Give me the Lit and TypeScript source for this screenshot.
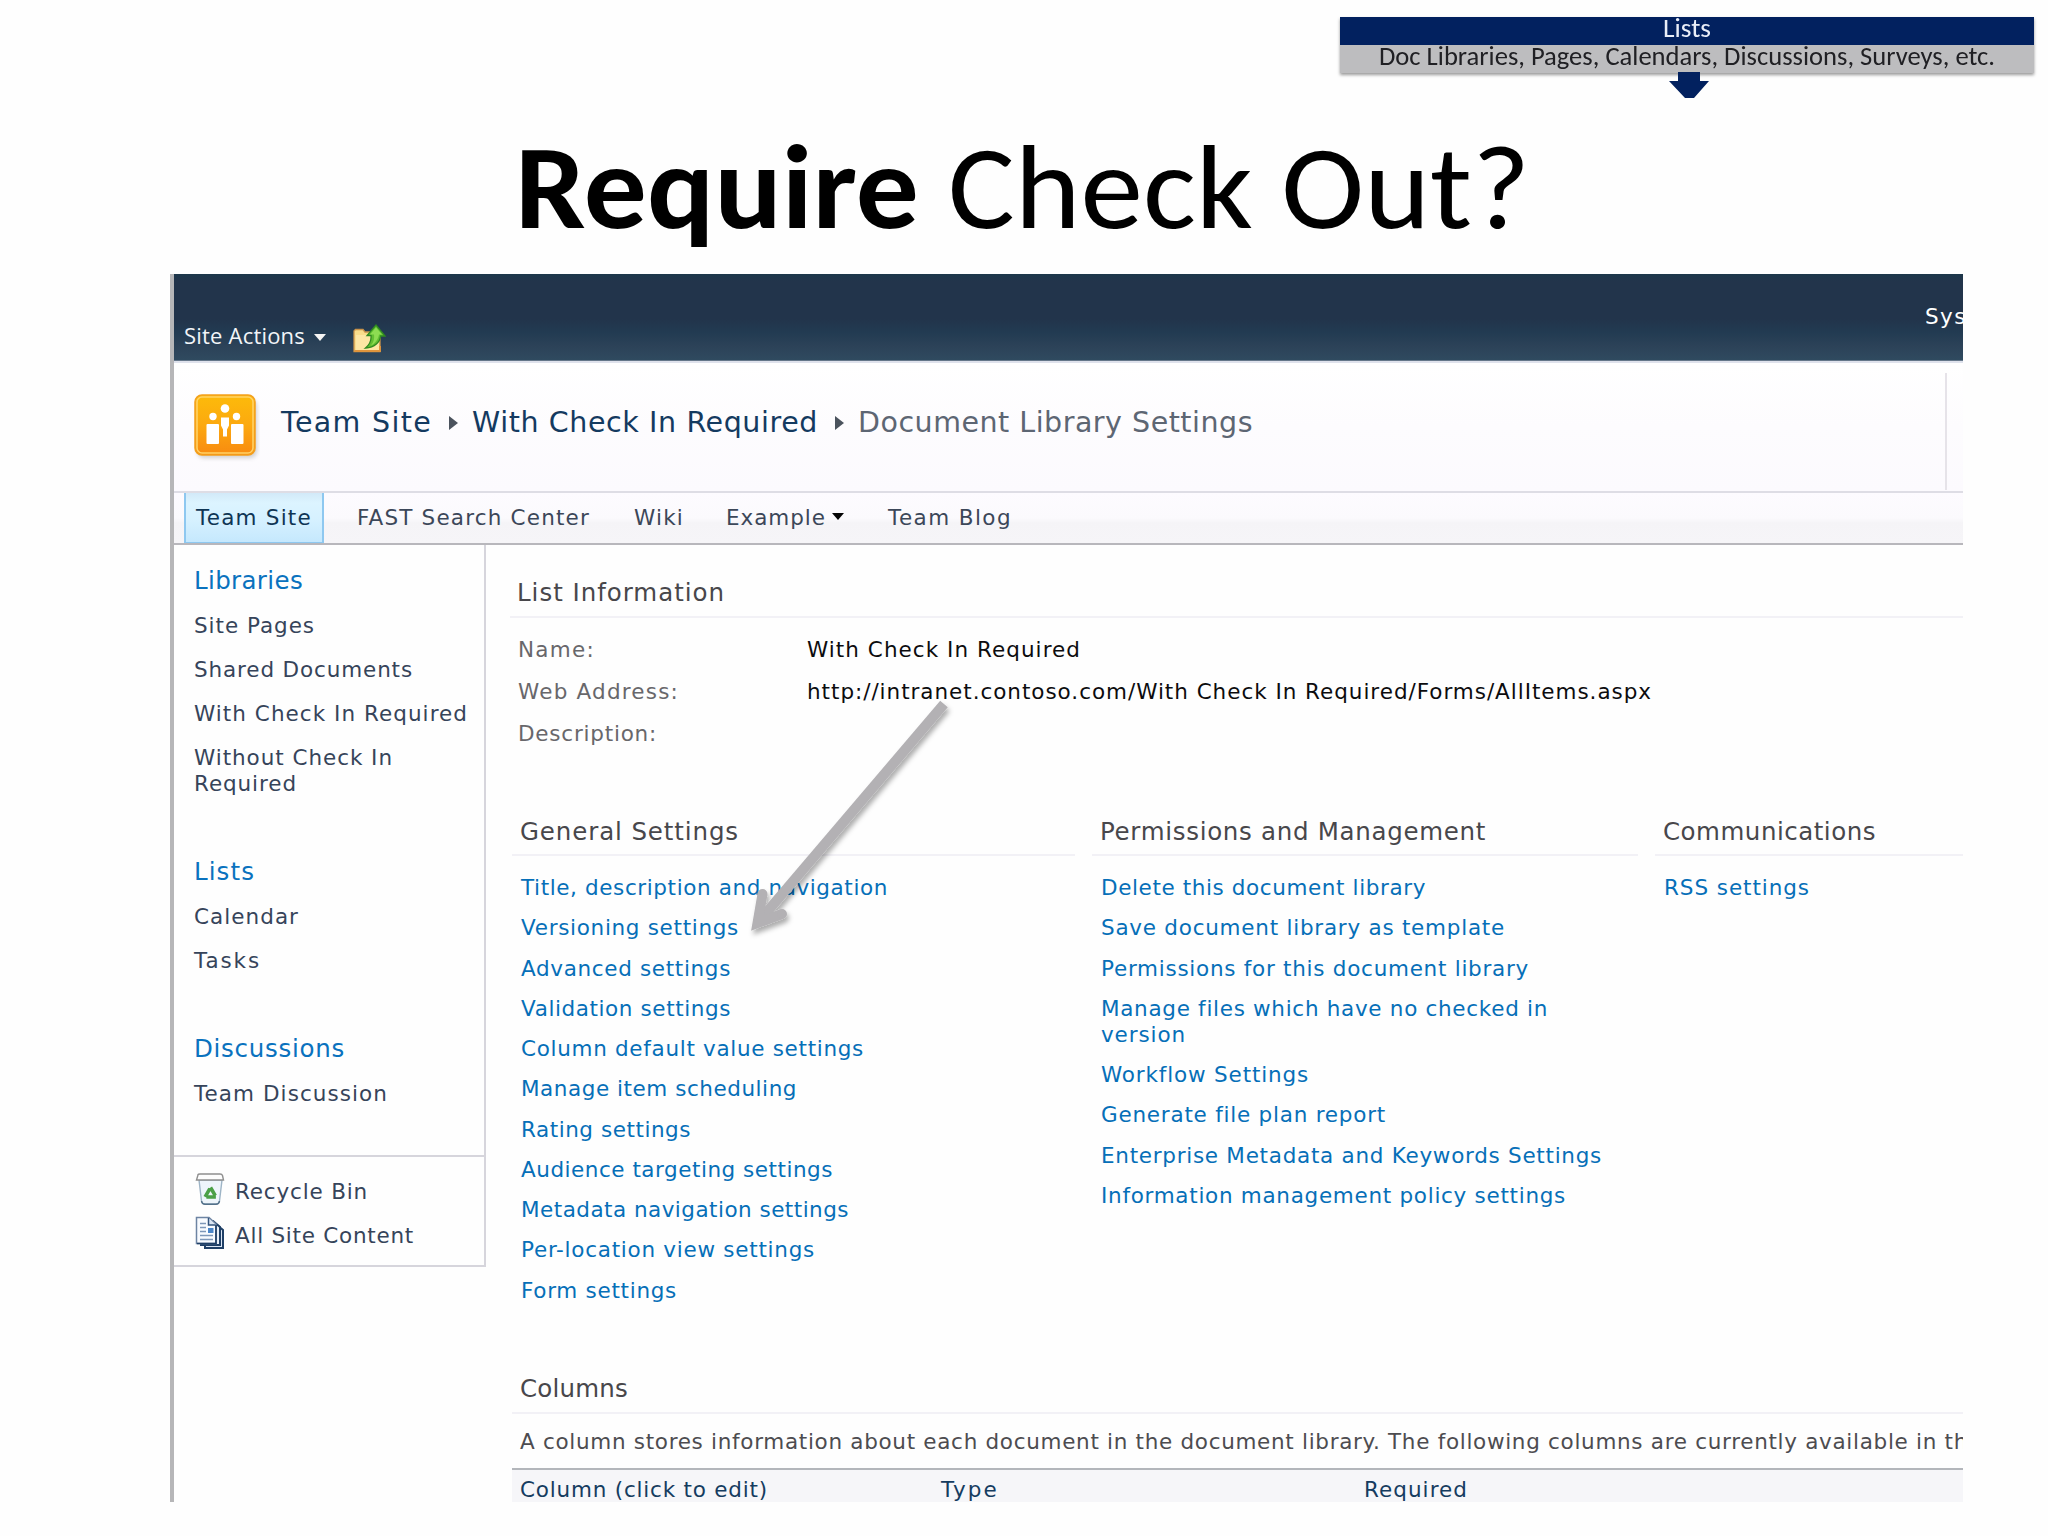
import { LitElement, html, css, svg } from "lit";
import { customElement, property } from "lit/decorators.js";

type Label = [text: string, width: number];

/** A single line of text set to a given measure by tracking or by condensing. */
@customElement("measured-label")
export class MeasuredLabel extends LitElement {
  @property() text = "";
  @property({ type: Number }) width = 0;
  @property({ type: Boolean }) condense = false;

  static styles = css`
    :host { display: inline-block; white-space: pre; vertical-align: top; text-align: left; }
    .run { display: inline-block; transform-origin: 0 50%; }
  `;

  updated() {
    const run = this.renderRoot.querySelector(".run") as HTMLElement;
    run.style.letterSpacing = "0px";
    run.style.transform = "none";
    this.style.width = `${this.width}px`;
    const natural = run.getBoundingClientRect().width;
    if (!natural || !this.width) return;
    if (this.condense) {
      run.style.transform = `scaleX(${this.width / natural})`;
    } else {
      run.style.letterSpacing = `${(this.width - natural) / this.text.length}px`;
    }
  }

  render() {
    return html`<span class="run">${this.text}</span>`;
  }
}

const label = ([text, width]: Label) =>
  html`<measured-label .text=${text} .width=${width}></measured-label>`;
const condensed = (text: string, width: number) =>
  html`<measured-label condense .text=${text} .width=${width}></measured-label>`;

const navGroups: { title: Label; items: Label[][] }[] = [
  {
    title: ["Libraries", 109],
    items: [
      [["Site Pages", 121]],
      [["Shared Documents", 219]],
      [["With Check In Required", 274]],
      [["Without Check In", 199], ["Required", 103]],
    ],
  },
  { title: ["Lists", 61], items: [[["Calendar", 105]], [["Tasks", 67]]] },
  { title: ["Discussions", 151], items: [[["Team Discussion", 194]]] },
];

const settings: { title: Label; links: Label[][] }[] = [
  {
    title: ["General Settings", 219],
    links: [
      [["Title, description and navigation", 367]],
      [["Versioning settings", 218]],
      [["Advanced settings", 210]],
      [["Validation settings", 210]],
      [["Column default value settings", 343]],
      [["Manage item scheduling", 276]],
      [["Rating settings", 170]],
      [["Audience targeting settings", 312]],
      [["Metadata navigation settings", 328]],
      [["Per-location view settings", 294]],
      [["Form settings", 156]],
    ],
  },
  {
    title: ["Permissions and Management", 386],
    links: [
      [["Delete this document library", 325]],
      [["Save document library as template", 404]],
      [["Permissions for this document library", 428]],
      [["Manage files which have no checked in", 447], ["version", 85]],
      [["Workflow Settings", 208]],
      [["Generate file plan report", 285]],
      [["Enterprise Metadata and Keywords Settings", 501]],
      [["Information management policy settings", 465]],
    ],
  },
  { title: ["Communications", 213], links: [[["RSS settings", 146]]] },
];

const folderIcon = svg`<svg class="folder" viewBox="0 0 34 30" width="34" height="30">
  <path d="M2 8 L3.500 6.500 H11 L13 9 H28 V28.500 H2Z" fill="#f9dd8b" stroke="#c8924a" stroke-width="1.300"/>
  <path d="M4 12 H27 V27.500 H4Z" fill="#fde6a4"/>
  <path d="M2.500 28 H28 V23 " fill="none" stroke="#e0953c" stroke-width="1.800"/>
  <path d="M13.500 25 C18 21.500 19.500 18 19 12.500 H15 L24 2 L33 13 H28.500 C28 19 23 24.500 13.500 25Z" fill="#62bf33" stroke="#2f8a20" stroke-width="1.300"/>
  <path d="M24 4.500 L30 11.500 H27 C26 17 23 20.500 19 22.500 C22 19 22.500 15 22 11.500 H18Z" fill="#8ddc52"/>
</svg>`;

const siteLogo = svg`<svg class="logo" viewBox="0 0 66 68" width="66" height="68">
  <defs>
    <linearGradient id="amber" x1="0" y1="0" x2="0" y2="1">
      <stop offset="0" stop-color="#fdbb0a"/><stop offset=".5" stop-color="#fca90f"/><stop offset="1" stop-color="#f88a10"/>
    </linearGradient>
    <filter id="logo-shade" x="-20%" y="-20%" width="140%" height="140%"><feGaussianBlur stdDeviation="2"/></filter>
  </defs>
  <rect x="3" y="5" width="60" height="59" rx="7" fill="#9a9a9a" opacity=".45" filter="url(#logo-shade)"/>
  <rect x="1" y="1" width="60" height="60" rx="7" fill="url(#amber)" stroke="#f3a01d" stroke-width="1.500"/>
  <rect x="3" y="3" width="56" height="56" rx="5" fill="none" stroke="#ffd266" stroke-width="1.600"/>
  <g fill="#fff">
    <circle cx="31" cy="14.500" r="4.300"/>
    <circle cx="19" cy="22.500" r="3.700"/>
    <circle cx="42.500" cy="22.500" r="3.700"/>
    <path d="M27 23.500 h8 v8 l-2 4 v7 h-4 v-7 l-2-4Z"/>
    <rect x="12.500" y="30" width="12.500" height="20" rx="1"/>
    <rect x="37" y="30" width="12.500" height="20" rx="1"/>
  </g>
</svg>`;

const binIcon = svg`<svg class="row-icon" viewBox="0 0 30 34" width="30" height="34">
  <path d="M4 8 L6.500 29 Q7 32 10 32 H21 Q24 32 24.500 29 L27 8Z" fill="#eef5fb" stroke="#9db4c6" stroke-width="1.400"/>
  <path d="M3 3 Q3 2 5 2 H25 Q27 2 27.500 3.500 L28.500 8 H1.500Z" fill="#fdfdfd" stroke="#8f8f8f" stroke-width="1.400"/>
  <path d="M6.500 29 Q7 32.300 10 32.300 H21 Q24 32.300 24.500 29" fill="none" stroke="#54718a" stroke-width="1.400"/>
  <path d="M15.500 15.500 L21 25 H10Z" fill="none" stroke="#4ba047" stroke-width="3.600" stroke-linejoin="round" stroke-dasharray="9.500 1.600"/>
</svg>`;

const pagesIcon = svg`<svg class="row-icon" viewBox="0 0 30 34" width="30" height="34">
  <path d="M10 9 H22 L28 14 V32 H10Z" fill="#dbe6f4" stroke="#1f3f66" stroke-width="2"/>
  <path d="M6 5 H18 L25 11 V29 H6Z" fill="#e9f0f9" stroke="#1f3f66" stroke-width="2"/>
  <path d="M1.500 1.500 H14 L21 8 V27.500 H1.500Z" fill="#f8fbff" stroke="#6d84a3" stroke-width="1.500"/>
  <path d="M21 9 V27.500 H2" fill="none" stroke="#1f3f66" stroke-width="1.700"/>
  <path d="M13.500 2 V9 H20.500" fill="#dbe6f4" stroke="#34557e" stroke-width="1.500"/>
  <rect x="13" y="12" width="5.500" height="5" fill="#4b86c9"/>
  <path d="M5 7.500h6M5 11.500h6M5 15.500h6M5 19.500h13M5 23.500h13" stroke="#7d97b8" stroke-width="1.500"/>
</svg>`;

@customElement("app-root")
export class AppRoot extends LitElement {
  static styles = css`
    :host {
      display: block; position: relative; width: 2048px; height: 1536px; overflow: hidden;
      background: #fefefe; font-family: "DejaVu Sans", sans-serif; font-size: 21.500px; line-height: 26px;
    }
    .slide { display: flex; flex-direction: column; height: 1536px; }
    .top { display: flex; flex-direction: column; align-items: flex-end; height: 100px; padding: 17px 14px 0 0; box-sizing: border-box; }
    .banner { width: 694px; height: 56px; font-family: Carlito, Lato, sans-serif; text-align: center; box-shadow: 0 2px 3px #9a9a9a; flex: none; }
    .banner-a { height: 28px; background: #02215f; color: #e9eef8; font-size: 26px; line-height: 22px; }
    .banner-b { height: 28px; background: #bdbdbf; color: #202024; font-size: 26px; line-height: 22px; }
    .down { width: 44px; height: 28px; margin: -1px 323px 0 0; flex: none; position: relative; }
    h1 {
      margin: 0; height: 174px; display: flex; padding-left: 515px; font: 400 120px/174px Carlito, Lato, sans-serif;
      color: #000; box-sizing: border-box;
    }
    h1 b { font-weight: 700; margin-right: 29px; }
    .shot {
      margin-left: 170px; width: 1793px; height: 1228px; box-sizing: border-box; border-left: 4px solid #b6b6b8;
      overflow: hidden; display: flex; flex-direction: column; flex: none;
    }
    .ribbon {
      height: 87px; flex: none; box-sizing: border-box; display: flex; color: #e8eff6;
      background: linear-gradient(#1c374a 0, #22344b 8%, #22344b 52%, #223b52 68%, #2c4258 84%, #2f4a5f 100%);
      border-bottom: 1px solid #65778a;
    }
    .actions { padding: 46px 0 0 10px; font: 22px/30px "Open Sans", sans-serif; color: #f2f5f8; width: 123px; }
    .caret { width: 0; height: 0; border: 6px solid transparent; border-top: 7px solid #f4f4f4; border-bottom: 0; margin: 60px 0 0 7px; }
    .folder { margin: 49px 0 0 26px; }
    .user { margin-left: auto; padding-top: 30px; width: 38px; white-space: nowrap; color: #fff; }
    .head {
      height: 130px; flex: none; display: flex; align-items: flex-start; box-sizing: border-box;
      border-top: 2px solid #dfe2ec; background: linear-gradient(#fff 0, #fdfcfe 50%, #fcfafe 100%);
      font-size: 28.500px; line-height: 36px; color: #143a60;
    }
    .logo { margin: 31px 0 0 20px; }
    .crumbs { display: flex; padding: 42px 0 0 21px; }
    .crumbs .tri { width: 0; height: 0; border: 7px solid transparent; border-left: 9px solid #4b535d; border-right: 0; margin: 11px 14px 0 17px; }
    .crumbs .here { color: #5d6673; }
    .rule { width: 2px; height: 117px; background: #e6e3e9; margin: 10px 16px 0 auto; }
    .tabs {
      height: 54px; flex: none; box-sizing: border-box; display: flex; border-top: 2px solid #dedde5; border-bottom: 2px solid #b8b7bc;
      background: linear-gradient(#fdfbff 0, #fbfafd 50%, #f5f4f7 60%, #f6f5f8 100%); padding-left: 10px; color: #3c4759; line-height: 49px;
    }
    .tab-on {
      width: 140px; box-sizing: border-box; border: solid #8ec8f0; border-width: 0 2px 1px; padding-left: 10px; color: #0f3554;
      background: linear-gradient(#d2e9f8 0, #dcf4ff 20%, #d6f1ff 55%, #c5e8fd 100%);
    }
    .tabs .t2 { margin-left: 33px; }
    .tabs .t3 { margin-left: 44px; }
    .tabs .t4 { margin-left: 42px; }
    .tabs .t5 { margin-left: 44px; }
    .tabs .mini { width: 0; height: 0; border: 6px solid transparent; border-top: 7px solid #050505; border-bottom: 0; margin: 20px 0 0 6px; }
    .body { display: flex; flex: 1; min-height: 0; align-items: flex-start; }
    .side { width: 312px; height: 722px; box-sizing: border-box; border-right: 2px solid #d6d5dc; border-bottom: 2px solid #d6d5dc; color: #36445a; flex: none; }
    .groups { height: 610px; box-sizing: border-box; padding: 21px 0 0 20px; display: flex; flex-direction: column; gap: 60px; }
    .group { display: flex; flex-direction: column; gap: 18px; }
    .group-title { font-size: 24.500px; line-height: 30px; height: 29px; color: #0a72be; }
    .lines { display: flex; flex-direction: column; }
    .foot { border-top: 2px solid #d6d5dc; padding: 15px 0 0 21px; display: flex; flex-direction: column; gap: 10px; }
    .foot-row { display: flex; gap: 10px; line-height: 39px; height: 34px; }
    .main { flex: 1; min-width: 0; padding: 33px 0 0 24px; color: #4d4c50; }
    .section { font-size: 24.500px; line-height: 30px; height: 40px; box-sizing: border-box; border-bottom: 2px solid #f2f1f6; padding-left: 7px; color: #48474b; }
    .info { padding: 11px 0 0 8px; line-height: 42px; color: #68676b; }
    .info-row { display: flex; height: 42px; }
    .info-key { width: 289px; }
    .info-value { color: #0c0c0e; }
    .settings { display: grid; grid-template-columns: 563px 546px 312px; column-gap: 17px; margin: 61px 0 0 2px; height: 558px; }
    .settings .section { padding-left: 8px; line-height: 31px; }
    .links { padding: 19px 0 0 9px; display: flex; flex-direction: column; gap: 14.250px; color: #066fb8; }
    .columns { margin-left: 2px; }
    .columns .section { padding-left: 8px; }
    .note { padding: 15px 0 0 8px; height: 39px; white-space: nowrap; color: #4d4c50; }
    .table { display: grid; grid-template-columns: 421px 423px 1fr; border-top: 2px solid #b3b6bb; background: #f6f6f9; color: #153c60; padding: 7px 0 0 8px; height: 26px; }
    .pointer { position: absolute; left: 730px; top: 680px; }
  `;

  render() {
    return html`
      <div class="slide">
        <div class="top">
          <div class="banner">
            <div class="banner-a">${condensed("Lists", 48)}</div>
            <div class="banner-b">${condensed("Doc Libraries, Pages, Calendars, Discussions, Surveys, etc.", 616)}</div>
          </div>
          <svg class="down" viewBox="0 0 44 28">
            <path d="M11 0 H33 V9 H42 L27 26 H18 L2 9 H11Z" fill="#02215f" />
          </svg>
        </div>
        <h1><b>${condensed("Require", 404)}</b>${condensed("Check Out?", 582)}</h1>
        <div class="shot">
          <div class="ribbon">
            <div class="actions">${label(["Site Actions", 121])}</div>
            <i class="caret"></i>
            ${folderIcon}
            <div class="user">${label(["Sys", 42])}</div>
          </div>
          <div class="head">
            ${siteLogo}
            <div class="crumbs">
              ${label(["Team Site", 151])}<i class="tri"></i>
              ${label(["With Check In Required", 346])}<i class="tri"></i>
              <span class="here">${label(["Document Library Settings", 395])}</span>
            </div>
            <i class="rule"></i>
          </div>
          <div class="tabs">
            <span class="tab-on">${label(["Team Site", 116])}</span>
            <span class="t2">${label(["FAST Search Center", 233])}</span>
            <span class="t3">${label(["Wiki", 50])}</span>
            <span class="t4">${label(["Example", 100])}</span>
            <i class="mini"></i>
            <span class="t5">${label(["Team Blog", 124])}</span>
          </div>
          <div class="body">
            <div class="side">
              <div class="groups">
                ${navGroups.map((g) => html`
                  <div class="group">
                    <div class="group-title">${label(g.title)}</div>
                    ${g.items.map((lines) => html`<div class="lines">${lines.map(label)}</div>`)}
                  </div>`)}
              </div>
              <div class="foot">
                <div class="foot-row">${binIcon}${label(["Recycle Bin", 133])}</div>
                <div class="foot-row">${pagesIcon}${label(["All Site Content", 179])}</div>
              </div>
            </div>
            <div class="main">
              <div class="section">${label(["List Information", 208])}</div>
              <div class="info">
                <div class="info-row"><span class="info-key">${label(["Name:", 77])}</span><span class="info-value">${label(["With Check In Required", 274])}</span></div>
                <div class="info-row"><span class="info-key">${label(["Web Address:", 161])}</span><span class="info-value">${label(["http://intranet.contoso.com/With Check In Required/Forms/AllItems.aspx", 845])}</span></div>
                <div class="info-row"><span class="info-key">${label(["Description:", 139])}</span></div>
              </div>
              <div class="settings">
                ${settings.map((s) => html`
                  <div>
                    <div class="section">${label(s.title)}</div>
                    <div class="links">
                      ${s.links.map((lines) => html`<div class="lines">${lines.map(label)}</div>`)}
                    </div>
                  </div>`)}
              </div>
              <div class="columns">
                <div class="section">${label(["Columns", 108])}</div>
                <div class="note">${label(["A column stores information about each document in the document library. The following columns are currently available in th", 1448])}</div>
                <div class="table">
                  ${label(["Column (click to edit)", 248])}${label(["Type", 58])}${label(["Required", 104])}
                </div>
              </div>
            </div>
          </div>
        </div>
      </div>
      <svg class="pointer" width="240" height="270" viewBox="730 680 240 270">
        <defs>
          <filter id="soft" x="-20%" y="-20%" width="140%" height="140%">
            <feDropShadow dx="2" dy="4" stdDeviation="2.5" flood-color="#000" flood-opacity=".32" />
          </filter>
        </defs>
        <g filter="url(#soft)" fill="none" stroke="#b3b1b4" stroke-width="10" stroke-miterlimit="8">
          <path d="M944 704 L757.500 923" />
          <path d="M762.500 894 L757.500 923 L782 914" />
          <path d="M762.500 894 v.01 M782 914 v.01" stroke-linecap="round" />
        </g>
      </svg>
    `;
  }
}
